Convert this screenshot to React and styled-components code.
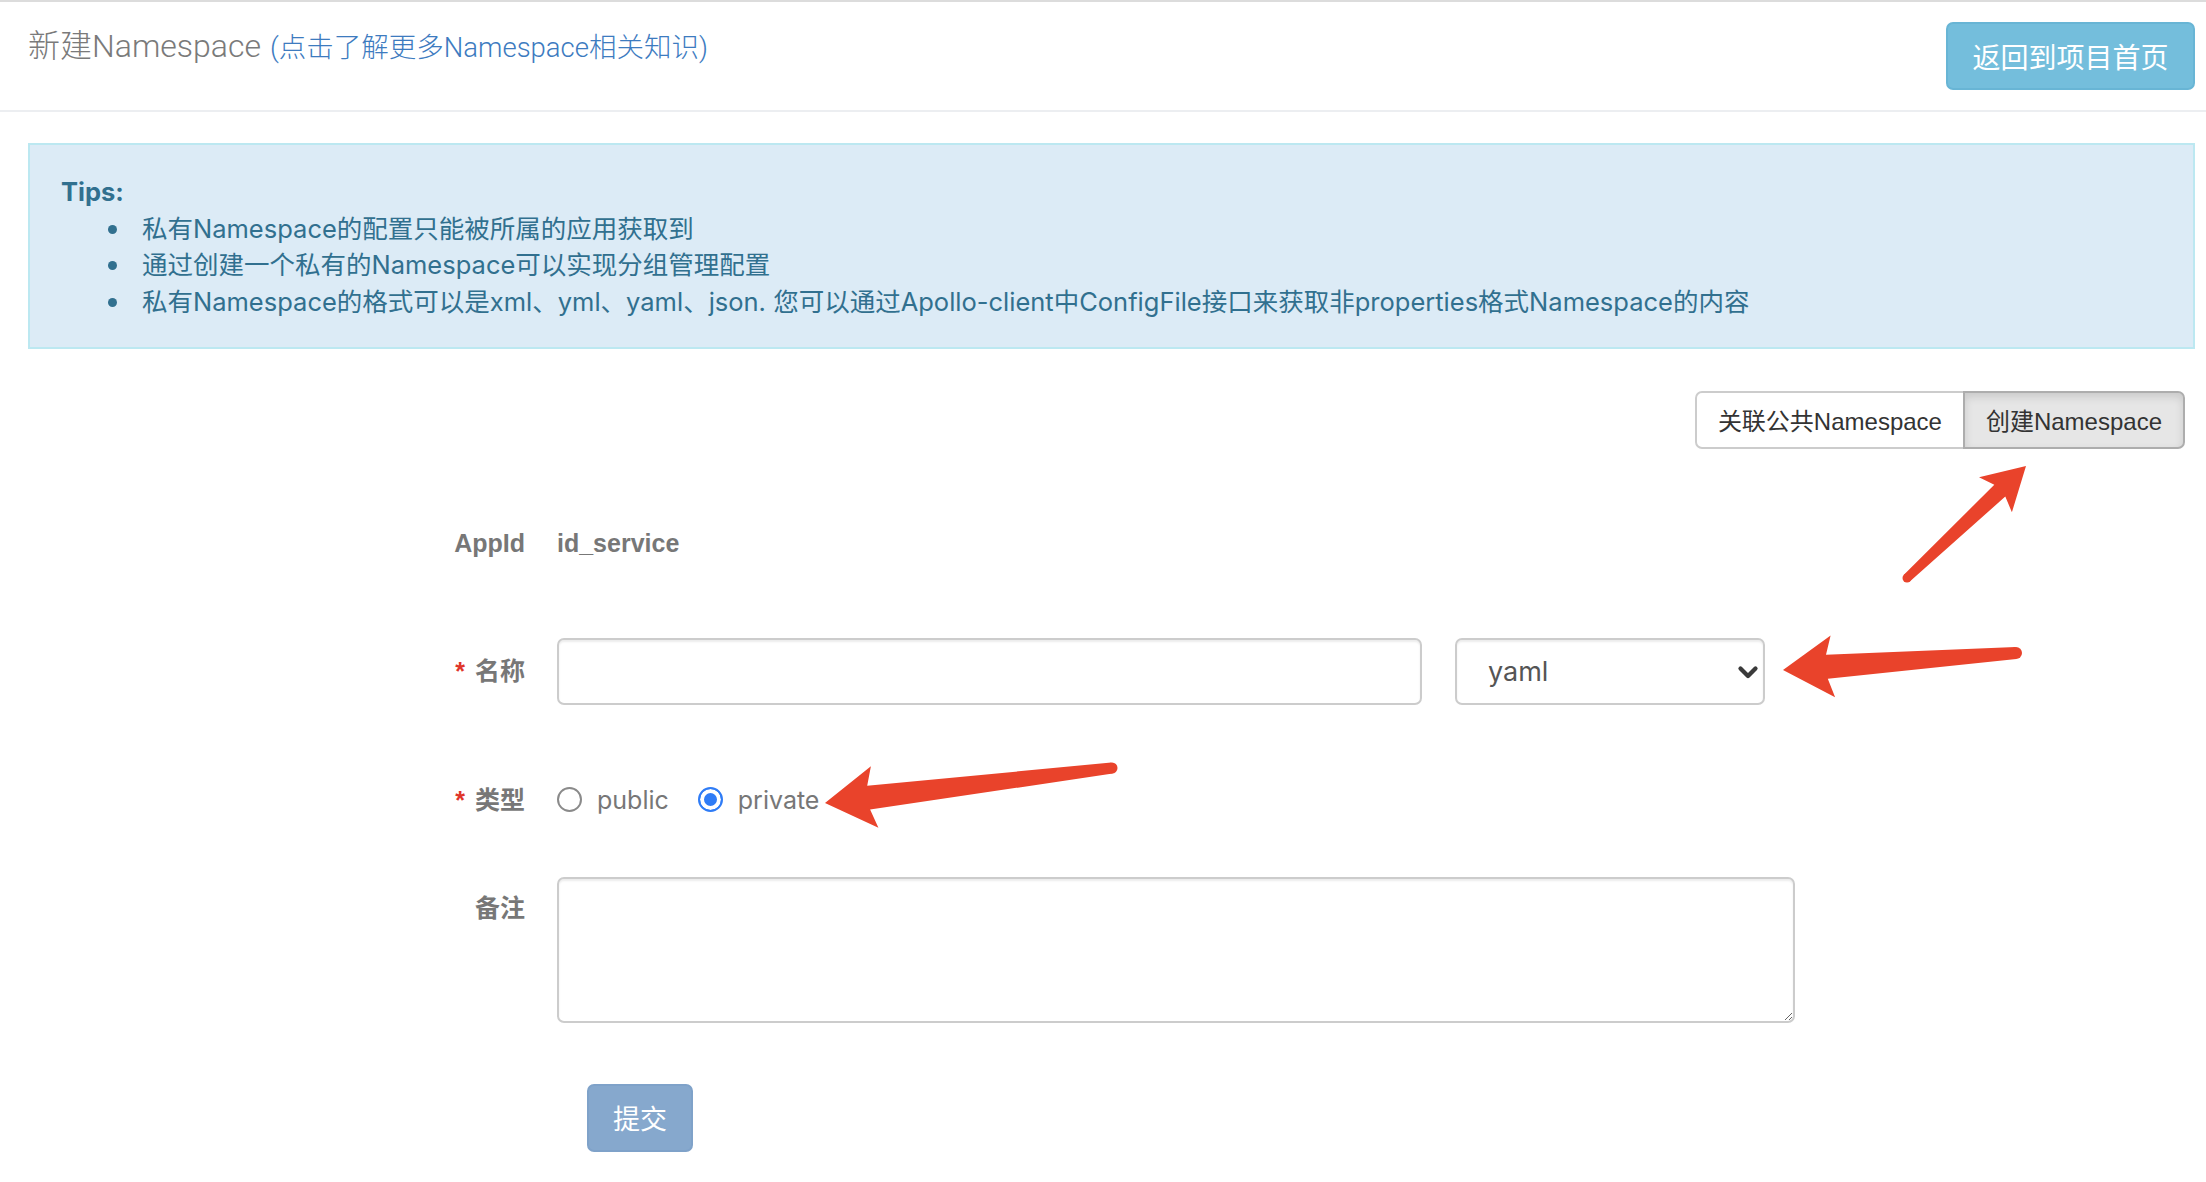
import React from 'react';
import styled, { createGlobalStyle } from 'styled-components';
import { ChevronDown } from 'lucide-react';

const GlobalStyle = createGlobalStyle`
  html, body { margin: 0; padding: 0; background: #fff; }
  body {
    width: 2206px;
    min-height: 1182px;
    overflow: hidden;
    font-family: 'Inter', 'Noto Sans CJK SC', sans-serif;
  }
  * { box-sizing: border-box; }
`;

const Page = styled.div`
  position: relative;
  width: 2206px;
  height: 1182px;
  background: #fff;
`;

const TopLine = styled.div`
  height: 2px;
  background: #dcdcdc;
`;

const Header = styled.header`
  display: flex;
  justify-content: space-between;
  align-items: flex-start;
  height: 110px;
  padding: 20px 11px 0 28px;
  border-bottom: 2px solid #eceef1;
`;

const Title = styled.h1`
  margin: 4px 0 0;
  font-family: 'Roboto', 'Noto Sans CJK SC', sans-serif;
  font-weight: 300;
  font-size: 32px;
  line-height: 40px;
  color: #7a7a7a;
`;

const TitleLink = styled.a`
  margin-left: 9px;
  font-size: 27.5px;
  color: #3d7bbf;
  text-decoration: none;
`;

const BackButton = styled.button`
  width: 249px;
  height: 68px;
  padding: 0;
  border: 2px solid #68b5d5;
  border-radius: 7px;
  background: #74bedc;
  color: #fff;
  font-family: 'Liberation Sans', 'Noto Sans CJK SC', sans-serif;
  font-size: 28px;
`;

const Main = styled.main`
  padding: 31px 11px 0 28px;
`;

const TipsBox = styled.div`
  border: 2px solid #bce8f1;
  background: #dcebf6;
  color: #31708f;
  padding: 29px 20px 26px 31px;
  font-size: 25.5px;
  line-height: 36.7px;
`;

const TipsTitle = styled.div`
  font-weight: 700;
`;

const TipsList = styled.ul`
  margin: 0;
  padding: 0 0 0 47px;
  list-style: none;
`;

const TipsItem = styled.li`
  display: flex;
  align-items: center;
  gap: 25px;
  white-space: nowrap;
`;

const Bullet = styled.span`
  flex: none;
  width: 9px;
  height: 9px;
  border-radius: 50%;
  background: #31708f;
`;

const Toolbar = styled.div`
  display: flex;
  justify-content: flex-end;
  margin: 42px 10px 0 0;
`;

const SegButton = styled.button`
  height: 58px;
  padding: 0 21px;
  border: 2px solid ${p => (p.$active ? '#adadad' : '#ccc')};
  background: ${p => (p.$active ? '#e6e6e6' : '#fff')};
  box-shadow: ${p => (p.$active ? 'inset 0 4px 9px rgba(0,0,0,0.125)' : 'none')};
  color: #333;
  font-family: 'Liberation Sans', 'Noto Sans CJK SC', sans-serif;
  font-size: 24px;
  border-radius: ${p => (p.$first ? '7px 0 0 7px' : '0 7px 7px 0')};
  margin-left: ${p => (p.$first ? '0' : '-2px')};
`;

const FormRow = styled.div`
  display: flex;
  align-items: ${p => (p.$top ? 'flex-start' : 'center')};
  margin-top: ${p => p.$mt}px;
`;

const Label = styled.label`
  flex: none;
  width: 497px;
  margin-right: 32px;
  padding-top: ${p => p.$pt || 0}px;
  text-align: right;
  font-family: 'Liberation Sans', 'Noto Sans CJK SC', sans-serif;
  font-weight: 700;
  font-size: 25px;
  line-height: 40px;
  color: #777;
`;

const Star = styled.span`
  color: #e0362a;
  margin-right: 10px;
`;

const StaticValue = styled.div`
  font-family: 'Liberation Sans', 'Noto Sans CJK SC', sans-serif;
  font-weight: 700;
  font-size: 25px;
  line-height: 40px;
  color: #777;
`;

const TextInput = styled.input`
  width: 865px;
  height: 67px;
  border: 2px solid #ccc;
  border-radius: 7px;
  box-shadow: inset 0 2px 2px rgba(0,0,0,0.075);
  padding: 0 22px;
  font-size: 26px;
  outline: none;
`;

const SelectWrap = styled.div`
  position: relative;
  width: 310px;
  height: 67px;
  margin-left: 33px;
`;

const Select = styled.select`
  appearance: none;
  -webkit-appearance: none;
  width: 100%;
  height: 100%;
  border: 2px solid #ccc;
  border-radius: 7px;
  box-shadow: inset 0 2px 2px rgba(0,0,0,0.075);
  background: #fff;
  padding: 0 0 0 31px;
  font-family: 'Inter', sans-serif;
  font-size: 27px;
  color: #555;
  outline: none;
`;

const Chevron = styled.span`
  position: absolute;
  right: 2px;
  top: 50%;
  transform: translateY(-46%);
  display: flex;
  color: #3a3a3a;
  pointer-events: none;
`;

const RadioGroup = styled.div`
  display: flex;
  align-items: center;
  gap: 29px;
  height: 40px;
`;

const RadioOption = styled.label`
  display: inline-flex;
  align-items: center;
  gap: 15px;
  font-size: 25px;
  color: #777;
`;

const Radio = styled.input`
  appearance: none;
  -webkit-appearance: none;
  margin: 0;
  width: 25px;
  height: 25px;
  border-radius: 50%;
  border: 2px solid #8a8a8a;
  background: #fff;
  &:checked {
    border-color: #2f7cf6;
    background: #2f7cf6;
    box-shadow: inset 0 0 0 4px #fff;
  }
`;

const TextArea = styled.textarea`
  width: 1238px;
  height: 146px;
  border: 2px solid #ccc;
  border-radius: 7px;
  box-shadow: inset 0 2px 2px rgba(0,0,0,0.075);
  outline: none;
  resize: both;
  font-size: 26px;
`;

const SubmitButton = styled.button`
  width: 106px;
  height: 68px;
  margin-left: 30px;
  border: 2px solid #7fa2c9;
  border-radius: 7px;
  background: #86a8cd;
  color: #fff;
  font-family: 'Noto Sans CJK SC', sans-serif;
  font-size: 27px;
`;

const Overlay = styled.svg`
  position: absolute;
  left: 0;
  top: 0;
  pointer-events: none;
`;

function arrowPoints([tx, ty], [hx, hy], tailW, neckW, headW, headL) {
  const dx = hx - tx;
  const dy = hy - ty;
  const len = Math.hypot(dx, dy);
  const ux = dx / len;
  const uy = dy / len;
  const nx = -uy;
  const ny = ux;
  const bx = hx - ux * headL;
  const by = hy - uy * headL;
  const kx = hx - ux * (headL - 6);
  const ky = hy - uy * (headL - 6);
  const pts = [
    [hx, hy],
    [bx + (nx * headW) / 2, by + (ny * headW) / 2],
    [kx + (nx * neckW) / 2, ky + (ny * neckW) / 2],
    [tx + (nx * tailW) / 2, ty + (ny * tailW) / 2],
    [tx - (nx * tailW) / 2, ty - (ny * tailW) / 2],
    [kx - (nx * neckW) / 2, ky - (ny * neckW) / 2],
    [bx - (nx * headW) / 2, by - (ny * headW) / 2],
  ];
  return pts.map(p => p.map(v => v.toFixed(1)).join(',')).join(' ');
}

const arrows = [
  { tail: [1907, 578], tip: [2026, 466], tailW: 9, neckW: 16, headW: 48, headL: 42 },
  { tail: [2016, 653], tip: [1783, 670], tailW: 12, neckW: 24, headW: 62, headL: 50 },
  { tail: [1112, 768], tip: [825, 803], tailW: 11, neckW: 24, headW: 62, headL: 50 },
];

const tips = [
  '私有Namespace的配置只能被所属的应用获取到',
  '通过创建一个私有的Namespace可以实现分组管理配置',
  '私有Namespace的格式可以是xml、yml、yaml、json. 您可以通过Apollo-client中ConfigFile接口来获取非properties格式Namespace的内容',
];

export default function App() {
  return (
    <Page>
      <GlobalStyle />
      <TopLine />
      <Header>
        <Title>
          新建Namespace
          <TitleLink href="#">(点击了解更多Namespace相关知识)</TitleLink>
        </Title>
        <BackButton>返回到项目首页</BackButton>
      </Header>
      <Main>
        <TipsBox>
          <TipsTitle>Tips:</TipsTitle>
          <TipsList>
            {tips.map(t => (
              <TipsItem key={t}>
                <Bullet />
                <span>{t}</span>
              </TipsItem>
            ))}
          </TipsList>
        </TipsBox>

        <Toolbar>
          <SegButton $first>关联公共Namespace</SegButton>
          <SegButton $active>创建Namespace</SegButton>
        </Toolbar>

        <FormRow $mt={74}>
          <Label>AppId</Label>
          <StaticValue>id_service</StaticValue>
        </FormRow>

        <FormRow $mt={75}>
          <Label>
            <Star>*</Star>名称
          </Label>
          <TextInput type="text" />
          <SelectWrap>
            <Select defaultValue="yaml">
              <option value="properties">properties</option>
              <option value="xml">xml</option>
              <option value="json">json</option>
              <option value="yml">yml</option>
              <option value="yaml">yaml</option>
            </Select>
            <Chevron>
              <ChevronDown size={30} strokeWidth={3.4} />
            </Chevron>
          </SelectWrap>
        </FormRow>

        <FormRow $mt={75}>
          <Label>
            <Star>*</Star>类型
          </Label>
          <RadioGroup>
            <RadioOption>
              <Radio type="radio" name="type" value="public" />
              public
            </RadioOption>
            <RadioOption>
              <Radio type="radio" name="type" value="private" defaultChecked />
              private
            </RadioOption>
          </RadioGroup>
        </FormRow>

        <FormRow $mt={57} $top>
          <Label $pt={11}>备注</Label>
          <TextArea />
        </FormRow>

        <FormRow $mt={61}>
          <Label />
          <SubmitButton disabled>提交</SubmitButton>
        </FormRow>
      </Main>

      <Overlay width="2206" height="1182" viewBox="0 0 2206 1182">
        {arrows.map((a, i) => (
          <g key={i} fill="#e9432b">
            <polygon points={arrowPoints(a.tail, a.tip, a.tailW, a.neckW, a.headW, a.headL)} />
            <circle cx={a.tail[0]} cy={a.tail[1]} r={a.tailW / 2} />
          </g>
        ))}
      </Overlay>
    </Page>
  );
}
